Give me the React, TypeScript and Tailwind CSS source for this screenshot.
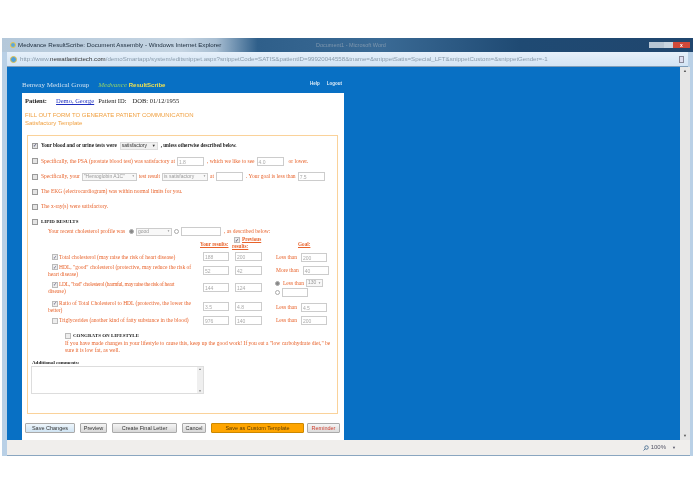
const serif = "font-['Liberation_Serif',serif]";
const or = "text-[#e8622a]";

function Box({ checked = false, light = false }: { checked?: boolean; light?: boolean }) {
  return (
    <span className={`inline-flex items-center justify-center w-[6px] h-[6px] shrink-0 border ${light ? "bg-[#eee] border-[#bbb]" : "bg-[#e4e4e4] border-[#999]"} text-[5px] leading-none text-[#557] indent-0`}>
      {checked ? "✓" : ""}
    </span>
  );
}
function Input({ v = "", w }: { v?: string; w: string }) {
  return <span className={`inline-block h-[9px] ${w} border border-[#ccc] bg-white text-[#aaa] text-[5px] leading-[8px] pl-[1px] font-['Liberation_Sans',sans-serif] shrink-0`}>{v}</span>;
}
function Select({ v, w }: { v: string; w: string }) {
  return (
    <span className={`inline-flex justify-between items-center h-[8px] ${w} border border-[#ccc] bg-[#f8f8f8] text-[#999] text-[5px] pl-[1px] pr-[1px] font-['Liberation_Sans',sans-serif] shrink-0`}>
      {v}<span className="text-[3px]">▼</span>
    </span>
  );
}
function Radio({ on = false }: { on?: boolean }) {
  return <span className={`inline-block w-[5px] h-[5px] rounded-full border border-[#aaa] shrink-0 ${on ? "bg-[#888]" : "bg-white"}`} />;
}
function Row({ h, children, cls = "" }: { h: string; children: React.ReactNode; cls?: string }) {
  return <div className={`flex items-center ${h} gap-[2px] ${cls}`}>{children}</div>;
}
function LipidRow({ h, label, a, b, goal, check = true }: { h: string; label: React.ReactNode; a: string; b: string; goal: React.ReactNode; check?: boolean }) {
  return (
    <div className={`flex items-center ${h}`}>
      <div className="w-[171px] pl-[16px] pr-[11px] indent-[4px] text-[5.5px] leading-[7px]">
        <span className="inline-flex w-[6px] mr-[1px] align-middle"><Box checked={check} light /></span>
        {label}
      </div>
      <div className="w-[32px]"><Input v={a} w="w-[26px]" /></div>
      <div className="w-[41px]"><Input v={b} w="w-[27px]" /></div>
      <div className="flex-1">{goal}</div>
    </div>
  );
}
function Goal({ t, v }: { t: string; v: string }) {
  return <div className="flex items-center gap-[4px]"><span>{t}</span><Input v={v} w="w-[26px]" /></div>;
}
function Btn({ t, w, cls = "" }: { t: string; w: string; cls?: string }) {
  return (
    <span className={`flex items-center justify-center ${w} h-[10px] border border-[#aaa] rounded-[1px] text-[5.5px] font-['Liberation_Sans',sans-serif] ${cls || "bg-gradient-to-b from-[#f5f5f5] to-[#d8d8d8] text-[#333]"}`}>{t}</span>
  );
}

export default function App() {
  return (
    <div className="w-[695px] h-[494px] bg-white pt-[38px] px-[2px] overflow-hidden font-['Liberation_Sans',sans-serif] blur-[0.45px]">
      <div className="w-[691px] h-[418px] flex flex-col bg-[#b9d0e6]">
        <div className="h-[14px] flex items-center pl-[8px] pr-[3px] bg-[linear-gradient(90deg,#b4c8da_0%,#c4d4e2_26%,#a8bed2_31%,#2f5f8a_37%,#3a6a95_55%,#1f4a73_75%,#20466e_100%)]">
          <span className="w-[6px] h-[6px] rounded-full bg-[#5aa6e0] border border-[#e8c84a] shrink-0" />
          <span className="w-[298px] ml-[2px] text-[6.2px] text-[#1a2a3a] whitespace-nowrap">Medvance ResultScribe: Document Assembly - Windows Internet Explorer</span>
          <span className="text-[5.5px] text-[#7f97ae] whitespace-nowrap">Document1 - Microsoft Word</span>
          <div className="flex h-[6px] ml-auto">
            <span className="w-[15px] bg-[#b8c6d4]" />
            <span className="w-[9px] bg-[#c8d4e0]" />
            <span className="w-[17px] bg-[#d0493a] text-white text-[5px] leading-[6px] text-center font-bold">x</span>
          </div>
        </div>
        <div className="h-[15px] flex items-center gap-[3px] mx-[5px] pl-[3px] pr-[4px] bg-gradient-to-b from-[#e6f0fa] to-[#d3e4f4] border-b border-[#7f9db9]">
          <span className="w-[7px] h-[7px] rounded-full bg-[#4d9fdc] border border-[#e5c34b] shrink-0" />
          <span className="text-[6.15px] text-[#8a9bab] whitespace-nowrap flex-1 overflow-hidden">http://www.<span className="text-[#333]">newatlantictech.com</span>/demoSmartapp/system/editsnippet.aspx?snippetCode=SATIS&amp;patientID=99920044558&amp;tname=&amp;snippetSatis=Special_LFT&amp;snippetCustom=&amp;snippetGender=-1</span>
          <span className="w-[5px] h-[7px] border border-[#889] bg-[#dde] shrink-0" />
        </div>
        <div className="h-[373px] flex mx-[5px] mr-[3px] bg-[#0870c4]">
          <div className="w-[673px] flex flex-col pl-[15px]">
            <div className="h-[26px] w-[322px] flex items-end justify-between pb-[3px] pr-[2px]">
              <div className={`flex items-baseline gap-[9px] text-[7px] ${serif}`}>
                <span className="text-[#cfe0ef]">Benway Medical Group</span>
                <span className="text-[#8fcf6a] italic">Medvance <span className="text-[#f0e050] font-bold not-italic font-['Liberation_Sans',sans-serif] text-[6px]">ResultScribe</span></span>
              </div>
              <div className="flex gap-[7px] text-[4.5px] text-[#dcebf7] pb-[2px] font-bold"><span>Help</span><span>Logout</span></div>
            </div>
            <div className={`w-[322px] h-[347px] bg-white px-[3px] ${serif} text-[#222]`}>
              <div className="h-[16px] flex items-center gap-[4px] text-[6.5px]">
                <span className="font-bold mr-[5px]">Patient:</span>
                <span className="text-[#2030c0] underline">Demo, George</span>
                <span>Patient ID:</span>
                <span className="ml-[2px]">DOB: 01/12/1955</span>
              </div>
              <div className="pt-[2px] text-[6px] leading-[8px] text-[#f0a040] font-['Liberation_Sans',sans-serif] h-[26px]">
                <div>FILL OUT FORM TO GENERATE PATIENT COMMUNICATION</div>
                <div>Satisfactory Template</div>
              </div>
              <div className={`ml-[2px] w-[311px] h-[279px] border border-[#fad29a] px-[4px] pt-[2px] text-[5.5px] ${or}`}>
                <Row h="h-[15px]" cls="text-[#222] font-bold text-[5.15px]"><Box checked /> <span className="ml-[1px]">Your blood and or urine tests were</span><span className="inline-flex items-center justify-between h-[8px] w-[38px] mx-[1px] bg-[#f0f0f0] border border-[#ddd] px-[1px] text-[#333] text-[5px] font-normal font-['Liberation_Sans',sans-serif]">satisfactory<span className="text-[4px]">▼</span></span><span>, unless otherwise described below.</span></Row>
                <Row h="h-[16px]"><Box /><span className="ml-[1px]">Specifically, the PSA (prostate blood test) was satisfactory at</span><Input v="1.8" w="w-[27px]" /><span className="ml-[1px]">, which we like to see</span><Input v="4.0" w="w-[27px]" /><span className="ml-[3px]">or lower.</span></Row>
                <Row h="h-[15px]"><Box /><span className="ml-[1px]">Specifically, your</span><Select v={'"Hemoglobin A1C"'} w="w-[55px]" /><span>test result</span><Select v="is satisfactory" w="w-[46px]" /><span>at</span><Input w="w-[27px]" /><span className="ml-[1px]">. Your goal is less than</span><Input v="7.5" w="w-[27px]" /></Row>
                <Row h="h-[15px]"><Box /><span className="ml-[1px]">The EKG (electrocardiogram) was within normal limits for you.</span></Row>
                <Row h="h-[15px]"><Box /><span className="ml-[1px]">The x-ray(s) were satisfactory.</span></Row>
                <Row h="h-[15px]" cls="text-[#222] font-bold text-[5px]"><Box /><span className="ml-[1px]">LIPID RESULTS</span></Row>
                <Row h="h-[5px]" cls="pl-[16px]"><span className="mr-[2px]">Your recent cholesterol profile was</span><Radio on /><Select v="good" w="w-[36px]" /><Radio /><Input w="w-[40px]" /><span className="ml-[1px]">, as described below:</span></Row>
                <div className="flex h-[17px] font-bold underline leading-[6px] items-end pb-[2px] text-[5.2px]">
                  <span className="ml-[168px] w-[32px] whitespace-nowrap mb-[2px]">Your results:</span>
                  <span className="w-[33px]"><span className="inline-flex align-middle ml-[2px] mr-[2px]"><Box checked light /></span>Previous results:</span>
                  <span className="ml-[33px] mb-[2px]">Goal:</span>
                </div>
                <LipidRow h="h-[12px]" label="Total cholesterol (may raise the risk of heart disease)" a="188" b="200" goal={<Goal t="Less than" v="200" />} />
                <LipidRow h="h-[15px]" label={'HDL, "good" cholesterol (protective, may reduce the risk of heart disease)'} a="52" b="42" goal={<Goal t="More than" v="40" />} />
                <LipidRow h="h-[20px]" label={<><span className="whitespace-nowrap tracking-[-0.28px]">LDL, "bad" cholesterol (harmful, may raise the risk of heart</span><br />disease)</>} a="144" b="124" goal={
                  <div className="-ml-[1px]">
                    <div className="flex items-center gap-[2px]"><Radio on /><span className="ml-[1px]">Less than</span><Select v="130" w="w-[17px]" /></div>
                    <div className="flex items-center gap-[2px] mt-[1px]"><Radio /><Input w="w-[26px]" /></div>
                  </div>} />
                <LipidRow h="h-[18px]" label="Ratio of Total Cholesterol to HDL (protective, the lower the better)" a="3.5" b="4.8" goal={<Goal t="Less than" v="4.5" />} />
                <LipidRow h="h-[9px]" check={false} label="Triglycerides (another kind of fatty substance in the blood)" a="976" b="140" goal={<Goal t="Less than" v="200" />} />
                <div className="pl-[33px] pt-[8px] leading-[6px]">
                  <div className="flex items-center gap-[2px] text-[#222] font-bold text-[5px]"><Box light />CONGRATS ON LIFESTYLE</div>
                  <div className="mt-[1px] w-[268px] text-[5.5px] leading-[6.5px]">If you have made changes in your lifestyle to cause this, keep up the good work! If you eat a "low carbohydrate diet," be sure it is low fat, as well.</div>
                </div>
                <div className="mt-[7px] font-bold text-[#222] text-[5px] leading-[6px]">Additional comments:</div>
                <div className="w-[173px] h-[28px] border border-[#ddd] flex justify-end -ml-[1px]">
                  <div className="w-[6px] h-full bg-[#efefef] flex flex-col justify-between items-center text-[3px] text-[#666]"><span>▲</span><span>▼</span></div>
                </div>
              </div>
              <div className="flex gap-[5px] mt-[9px]">
                <Btn t="Save Changes" w="w-[50px]" cls="border-[#5a9fd0] bg-gradient-to-b from-[#eef6fc] to-[#cfe3f2] text-[#333]" />
                <Btn t="Preview" w="w-[27px]" />
                <Btn t="Create Final Letter" w="w-[65px]" />
                <Btn t="Cancel" w="w-[24px]" />
                <Btn t="Save as Custom Template" w="w-[93px]" cls="bg-[#ffa500] text-[#5a3a00] border-[#cc8800]" />
                <Btn t="Reminder" w="w-[33px]" cls="bg-gradient-to-b from-[#f5f5f5] to-[#dcdcdc] text-[#d04030] -ml-[2px]" />
              </div>
            </div>
          </div>
          <div className="w-[10px] bg-[#e6e6e6] flex flex-col justify-between items-center py-[1px] text-[4px] text-[#555]"><span>▲</span><span>▼</span></div>
        </div>
        <div className="h-[16px] mx-[5px] mr-[3px] bg-[#f0eeec] border-b border-[#8aa6c0] flex items-center justify-end pr-[14px] gap-[6px] text-[6px] text-[#556]">
          <span className="flex items-center gap-[2px]">
            <svg width="6" height="6" viewBox="0 0 12 12" fill="none" stroke="#5a7a9a" strokeWidth="2"><circle cx="7" cy="5" r="3.5" /><path d="M4.5 7.5 1 11" /></svg>
            100%
          </span>
          <span className="text-[4px]">▼</span>
        </div>
      </div>
    </div>
  );
}
